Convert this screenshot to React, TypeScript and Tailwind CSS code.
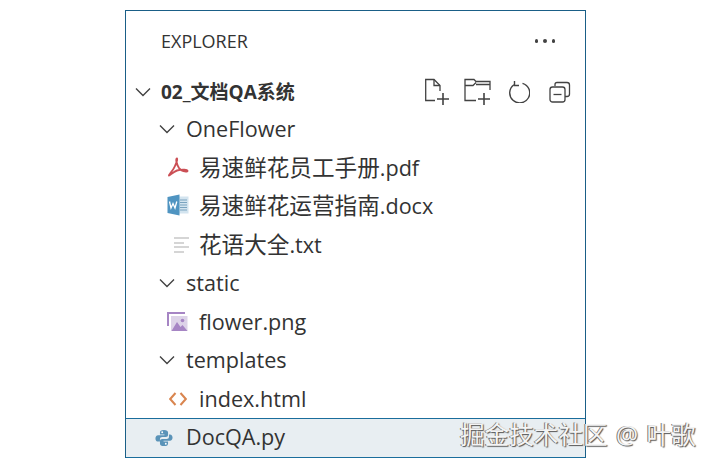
import React from "react";

const font = { fontFamily: '"Open Sans","Noto Sans CJK SC",sans-serif' };

const Chevron = () => (
  <svg width="18" height="18" viewBox="0 0 18 18" fill="none" stroke="#424242" strokeWidth="1.4" className="shrink-0">
    <path d="M2 5.5 L9 12.5 L16 5.5" />
  </svg>
);

const Pdf = () => (
  <svg width="22" height="22" viewBox="0 0 22 22" fill="none" stroke="#cb4f55" strokeWidth="1.9" className="-mt-[2px]">
    <path d="M10 2.5 C8.5 3 9.5 8 12 12 C14 15 19 16.5 20.5 15 C21 13.5 15 13 10 14.5 C6 16 3 19.5 2 19.5 C1.5 18.5 6 15 8 10 C9 7.5 11 3.5 10 2.5 Z" strokeLinejoin="round" />
  </svg>
);
const Word = () => (
  <svg width="22" height="22" viewBox="0 0 22 22" className="-mt-[2px]">
    <rect x="9" y="2.5" width="12.5" height="17" fill="#d3e4ef" />
    <path d="M13 6h7M13 8.5h7M13 11h7M13 13.5h7M13 16h7" stroke="#7aa3bf" strokeWidth="1" />
    <path d="M0.5 3 L12.5 0.5 V21.5 L0.5 19 Z" fill="#4f94c1" />
    <path d="M2.5 7.5 L4 14 L6 9.5 L8 14 L9.8 7.5" fill="none" stroke="#fff" strokeWidth="1.3" />
  </svg>
);
const Txt = () => (
  <svg width="16" height="18" viewBox="0 0 16 18" stroke="#d5d5d5" strokeWidth="2" className="ml-[7px]">
    <path d="M0 2h15M0 7h10M0 11h15M0 16h10" />
  </svg>
);
const Png = () => (
  <svg width="21" height="20" viewBox="0 0 21 20" className="-ml-[2px]">
    <path d="M1 14 V1 H18" fill="none" stroke="#a685c4" strokeWidth="2" />
    <rect x="4" y="4" width="16.5" height="15" fill="#ddd3e8" />
    <circle cx="15.5" cy="8.5" r="1.8" fill="#a685c4" />
    <path d="M4.5 19 L10 10 L13.5 15 L15.5 13 L20.5 19 Z" fill="#a685c4" />
  </svg>
);
const Html = () => (
  <svg width="18" height="14" viewBox="0 0 18 14" fill="none" stroke="#d9854f" strokeWidth="2">
    <path d="M6.5 1 L1.2 7 L6.5 13" />
    <path d="M11.5 1 L16.8 7 L11.5 13" />
  </svg>
);
const Py = () => (
  <svg width="18" height="18" viewBox="0 0 20 20">
    <path d="M10 1 C6.5 1 5.5 2.2 5.5 4 V6 H10.5 V7 H3.5 C1.5 7 0.5 8.5 0.5 10.5 C0.5 12.5 1.5 14 3.5 14 H5.5 V11.5 C5.5 10 6.5 9 8 9 H12 C13.5 9 14.5 8 14.5 6.5 V4 C14.5 2 13 1 10 1 Z" fill="#5a93b8" />
    <path d="M10 19 C13.5 19 14.5 17.8 14.5 16 V14 H9.5 V13 H16.5 C18.5 13 19.5 11.5 19.5 9.5 C19.5 7.5 18.5 6 16.5 6 H15.5 V8.5 C15.5 10 14.5 11 13 11 H8 C6.5 11 5.5 12 5.5 13.5 V16 C5.5 18 7 19 10 19 Z" fill="#5a93b8" />
    <circle cx="8" cy="3.6" r="1" fill="#fff" />
    <circle cx="12" cy="16.4" r="1" fill="#fff" />
  </svg>
);

const ActionIcons = () => (
  <div className="flex items-center pr-[14px]">
    <svg width="26" height="28" viewBox="0 0 26 28" fill="none" stroke="#424242" strokeWidth="1.3">
      <path d="M10 22.5 H0.7 V1.5 H9 L15 7.5 V13" />
      <path d="M9 1.5 V7.5 H15" />
      <path d="M18 15 V27 M12 21 H24" strokeWidth="1.6" />
    </svg>
    <svg width="28" height="28" viewBox="0 0 28 28" fill="none" stroke="#424242" strokeWidth="1.3" className="ml-[13px]">
      <path d="M12 22.5 H1 V1.5 H10 L12 3.5 H26 V12" />
      <path d="M1 7.5 H9 L12 4.5 M12 6.5 H26" />
      <path d="M20 15 V27 M14 21 H26" strokeWidth="1.6" />
    </svg>
    <svg width="22" height="22" viewBox="0 0 22 22" fill="none" stroke="#424242" strokeWidth="1.4" className="ml-[16px]">
      <path d="M6 3.7 A10 10 0 1 0 14.5 2.3" />
      <path d="M6.5 0 V4.5 H11" />
    </svg>
    <svg width="22" height="22" viewBox="0 0 22 22" fill="none" stroke="#424242" strokeWidth="1.3" className="ml-[19px]">
      <path d="M6 5 V3.5 Q6 1.5 8 1.5 H18 Q20.5 1.5 20.5 4 V13 Q20.5 15.5 18 15.5 H16" />
      <rect x="1" y="6" width="15" height="15" rx="2.5" />
      <path d="M4.5 13.5 H12.5" />
    </svg>
  </div>
);

const Row = ({ indent, children }: { indent: string; children: React.ReactNode }) => (
  <div className={`flex h-[38.5px] items-center text-[21.6px] text-[#333333] ${indent}`}>{children}</div>
);

const Folder = ({ name }: { name: string }) => (
  <Row indent="pl-[32px]">
    <Chevron />
    <span className="ml-[10px]">{name}</span>
  </Row>
);

const File = ({ cjk, name, icon }: { cjk?: string; name: string; icon: React.ReactNode }) => (
  <Row indent="pl-[40px]">
    <span className="flex w-[24px] justify-center">{icon}</span>
    <span className="ml-[9px]">
      {cjk && <span className="text-[22.6px]">{cjk}</span>}
      {name}
    </span>
  </Row>
);

export default function App() {
  return (
    <div className="relative h-[465px] w-[710px] overflow-hidden bg-white pl-[125px] pt-[10px]" style={font}>
      <div className="h-[448px] w-[461px] border border-[#1a5f87] bg-white">
        <div className="flex h-[60px] items-center justify-between pl-[35px] pr-[30px]">
          <span className="text-[18px] text-[#333333]">EXPLORER</span>
          <span className="flex gap-[5px]">
            <i className="size-[3.5px] rounded-full bg-[#424242]" />
            <i className="size-[3.5px] rounded-full bg-[#424242]" />
            <i className="size-[3.5px] rounded-full bg-[#424242]" />
          </span>
        </div>
        <div className="flex h-[42px] items-center justify-between pl-[8px]">
          <div className="flex items-center">
            <Chevron />
            <span className="ml-[9px] text-[19px] font-bold text-[#333333]">02_文档QA系统</span>
          </div>
          <ActionIcons />
        </div>
        <div className="-mt-[3px]">
          <Folder name="OneFlower" />
          <File cjk="易速鲜花员工手册" name=".pdf" icon={<Pdf />} />
          <File cjk="易速鲜花运营指南" name=".docx" icon={<Word />} />
          <File cjk="花语大全" name=".txt" icon={<Txt />} />
          <Folder name="static" />
          <File name="flower.png" icon={<Png />} />
          <Folder name="templates" />
          <File name="index.html" icon={<Html />} />
          <div className="flex h-[40px] items-center border-y border-[#1a6d9c] bg-[#e8eef2] pl-[29px] text-[21.6px] text-[#333333]">
            <Py />
            <span className="ml-[13px] -translate-y-[1px]">DocQA.py</span>
          </div>
        </div>
      </div>
      <div
        className="absolute left-[460px] top-[420px] text-[24.6px] leading-[30px] text-[#f4f4f4] [word-spacing:2px]"
        style={{ textShadow: "1px 1px 1px #555, -1px -0.5px 0.5px #777" }}
      >
        掘金技术社区 @ 叶歌
      </div>
    </div>
  );
}
